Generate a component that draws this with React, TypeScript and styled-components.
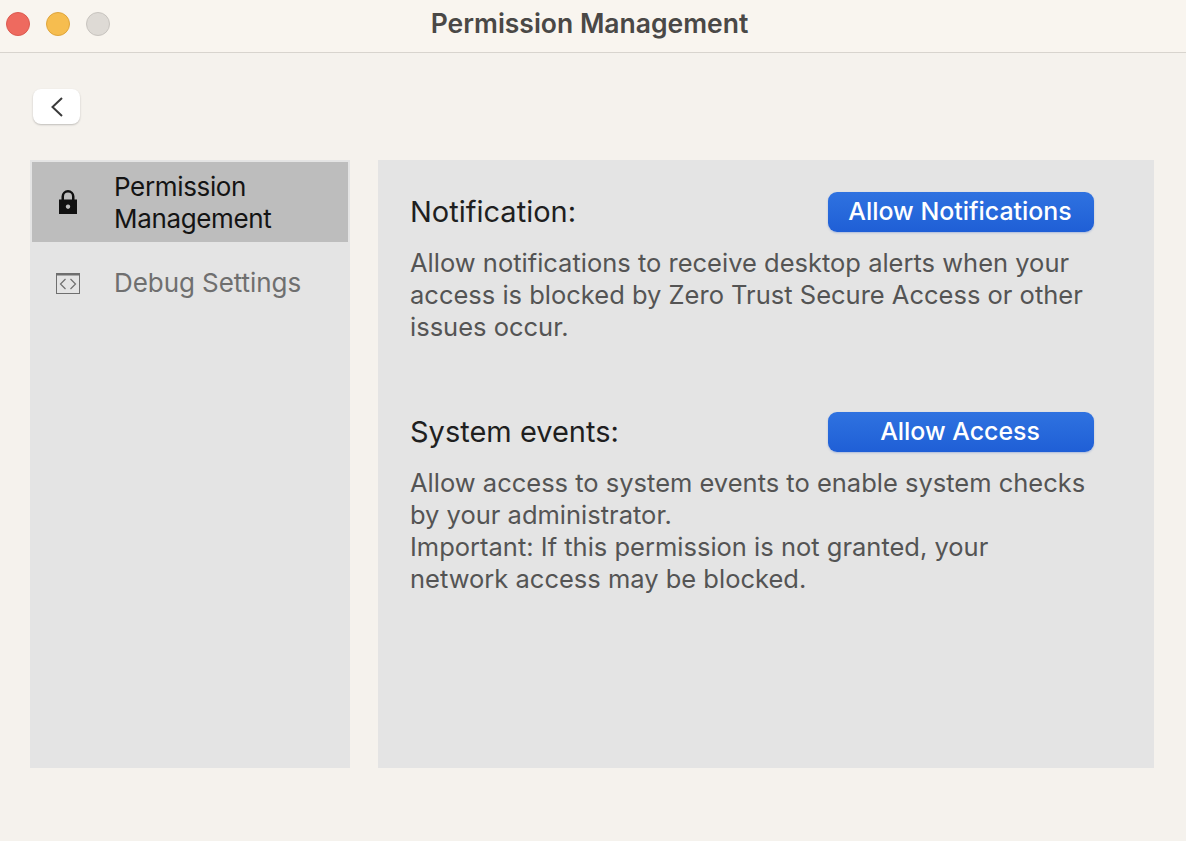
import React from "react";
import styled, { createGlobalStyle } from "styled-components";

const Global = createGlobalStyle`
  html, body { margin: 0; padding: 0; background: #f5f2ed; }
  body { font-family: Inter, "Liberation Sans", sans-serif; }
  * { box-sizing: border-box; }
`;

const Page = styled.div`
  width: 1186px;
  height: 841px;
  background: #f5f2ed;
  display: flex;
  flex-direction: column;
  overflow: hidden;
`;

const TitleBar = styled.header`
  height: 53px;
  flex: none;
  position: relative;
  display: flex;
  align-items: center;
  justify-content: center;
  padding-right: 7px;
  background: #f9f5ef;
  border-bottom: 1px solid #d8d4ce;
`;

const Lights = styled.div`
  position: absolute;
  left: 6px;
  top: 12px;
  display: flex;
  gap: 16px;
`;

const Light = styled.span<{ $fill: string; $edge: string }>`
  width: 24px;
  height: 24px;
  border-radius: 50%;
  background: ${(p) => p.$fill};
  border: 1px solid ${(p) => p.$edge};
`;

const Title = styled.h1`
  margin: 0 0 6px;
  font-size: 26.5px;
  font-weight: 600;
  color: #4a4846;
`;

const Body = styled.main`
  flex: 1;
  padding: 36px 32px 73px 30px;
  display: flex;
  flex-direction: column;
`;

const BackButton = styled.button`
  width: 47px;
  height: 35px;
  margin-left: 3px;
  padding: 0;
  border: none;
  border-radius: 8px;
  background: #fff;
  box-shadow: 0 1px 2px rgba(0, 0, 0, 0.22);
  display: flex;
  align-items: center;
  justify-content: center;
`;

const Columns = styled.div`
  flex: 1;
  margin-top: 36px;
  display: flex;
  gap: 28px;
  min-height: 0;
`;

const Sidebar = styled.nav`
  width: 320px;
  flex: none;
  background: #e4e4e4;
  padding: 2px;
`;

const NavItem = styled.div<{ $active?: boolean }>`
  display: flex;
  align-items: center;
  min-height: ${(p) => (p.$active ? 80 : 82)}px;
  background: ${(p) => (p.$active ? "#bdbdbd" : "transparent")};
  color: ${(p) => (p.$active ? "#141414" : "#6f6f6f")};
  font-size: 26px;
  line-height: 32px;
  letter-spacing: ${(p) => (p.$active ? -0.35 : -0.07)}px;
`;

const NavIcon = styled.span`
  width: 82px;
  flex: none;
  display: flex;
  justify-content: center;
  padding-right: 10px;
`;

const NavLabel = styled.span`
  width: 190px;
  padding-top: 2px;
`;

const Content = styled.section`
  flex: 1;
  background: #e4e4e4;
  padding: 32px 60px 0 32px;
`;

const Block = styled.div`
  margin-bottom: 69px;
`;

const BlockHead = styled.div`
  display: flex;
  align-items: center;
  justify-content: space-between;
  height: 40px;
  margin-bottom: 15px;
`;

const Heading = styled.h2`
  margin: 0;
  padding-bottom: 2px;
  font-size: 29px;
  font-weight: 400;
  color: #1f1f1f;
`;

const AllowButton = styled.button`
  width: 266px;
  height: 40px;
  border: none;
  border-radius: 9px;
  padding: 0 2px 2px 0;
  font-family: inherit;
  font-size: 24.9px;
  font-weight: 500;
  color: #fff;
  background: linear-gradient(180deg, #2f72e0 0%, #1f5fd6 100%);
  box-shadow: 0 1px 2px rgba(40, 90, 200, 0.3);
`;

const Text = styled.p`
  margin: 0;
  font-size: 25.5px;
  line-height: 32px;
  color: #545454;
`;

export default function App() {
  return (
    <Page>
      <Global />
      <TitleBar>
        <Lights>
          <Light $fill="#ee6a5f" $edge="#dc5a50" />
          <Light $fill="#f6bd4f" $edge="#dfa53c" />
          <Light $fill="#dedad5" $edge="#c8c4bf" />
        </Lights>
        <Title>Permission Management</Title>
      </TitleBar>
      <Body>
        <BackButton aria-label="Back">
          <svg width="16" height="22" viewBox="0 0 16 22" fill="none">
            <path d="M13 2 L3.5 11 L13 20" stroke="#3a3a3a" strokeWidth="2" />
          </svg>
        </BackButton>
        <Columns>
          <Sidebar>
            <NavItem $active>
              <NavIcon>
                <svg width="20" height="26" viewBox="0 0 20 26">
                  <path
                    fillRule="evenodd"
                    fill="#111"
                    d="M1 10.5h2.5V7.5a6.5 6.5 0 0 1 13 0v3H19v14.5H1zM6 10.5h8V7.5a4 4 0 0 0-8 0zM10 15.5a2.2 2.2 0 1 0 .01 0z"
                  />
                </svg>
              </NavIcon>
              <NavLabel>Permission Management</NavLabel>
            </NavItem>
            <NavItem>
              <NavIcon>
                <svg width="24" height="21" viewBox="0 0 24 21" fill="none" stroke="#6f6f6f">
                  <rect x="0.5" y="0.5" width="23" height="20" strokeWidth="1" />
                  <path d="M0.5 1.5h23" strokeWidth="2" />
                  <path d="M9.5 6 L4.5 11 L9.5 16 M14.5 6 L19.5 11 L14.5 16" strokeWidth="1.2" />
                </svg>
              </NavIcon>
              <span>Debug Settings</span>
            </NavItem>
          </Sidebar>
          <Content>
            <Block>
              <BlockHead>
                <Heading>Notification:</Heading>
                <AllowButton>Allow Notifications</AllowButton>
              </BlockHead>
              <Text>
                Allow notifications to receive desktop alerts when your
                <br />
                access is blocked by Zero Trust Secure Access or other
                <br />
                issues occur.
              </Text>
            </Block>
            <Block>
              <BlockHead>
                <Heading>System events:</Heading>
                <AllowButton>Allow Access</AllowButton>
              </BlockHead>
              <Text>
                Allow access to system events to enable system checks
                <br />
                by your administrator.
                <br />
                Important: If this permission is not granted, your
                <br />
                network access may be blocked.
              </Text>
            </Block>
          </Content>
        </Columns>
      </Body>
    </Page>
  );
}
